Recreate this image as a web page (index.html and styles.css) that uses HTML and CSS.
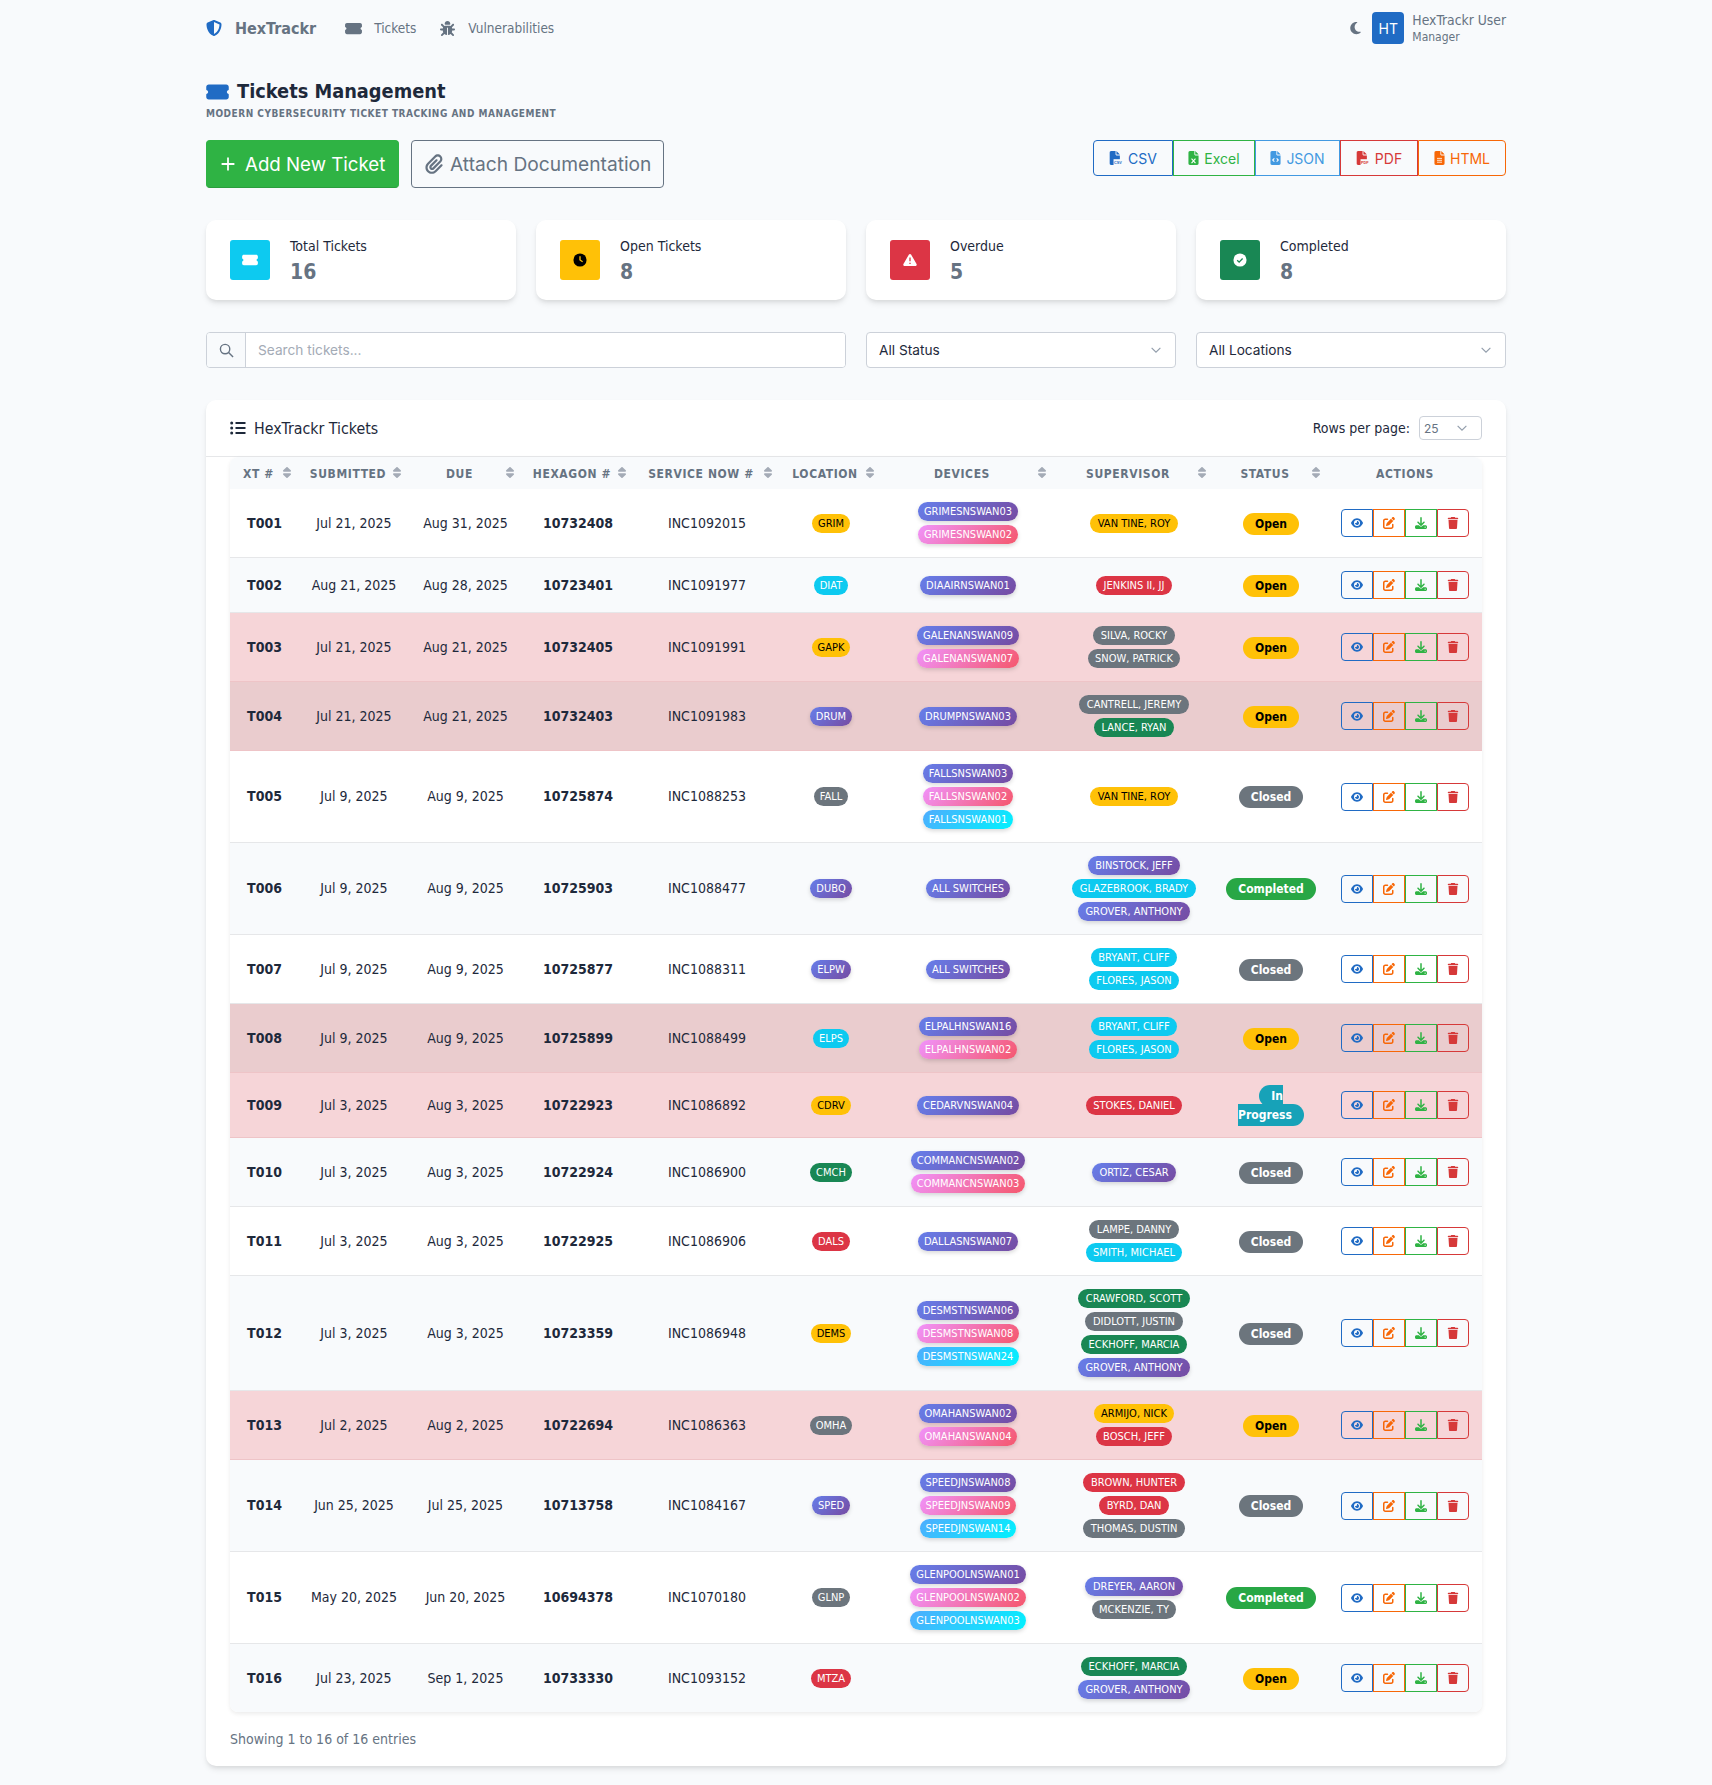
FILE: index.html
```html
<!DOCTYPE html>
<html lang="en">
<head>
    <meta charset="UTF-8">
    <meta name="viewport" content="width=device-width, initial-scale=1.0">
    <title>HexTrackr - Tickets</title>
    <link rel="stylesheet" href="styles.css">
</head>
<body>
    <!-- Icon sprite -->
    <svg class="sprite" xmlns="http://www.w3.org/2000/svg">
        <symbol id="i-ticket" viewBox="0 0 576 512"><path d="M64 64C28.7 64 0 92.7 0 128v64c0 8.8 7.4 15.7 15.7 18.6C34.5 217.1 48 235 48 256s-13.5 38.9-32.3 45.4C7.4 304.3 0 311.2 0 320v64c0 35.3 28.7 64 64 64H512c35.3 0 64-28.7 64-64V320c0-8.8-7.4-15.7-15.7-18.6C541.5 294.9 528 277 528 256s13.5-38.9 32.3-45.4c8.3-2.9 15.7-9.8 15.7-18.6V128c0-35.3-28.7-64-64-64H64z"/></symbol>
        <symbol id="i-shield" viewBox="0 0 512 512"><path d="M256 0c4.6 0 9.2 1 13.4 2.9L457.7 82.8c22 9.3 38.4 31 38.3 57.2c-.5 99.2-41.3 280.7-213.6 363.2c-16.7 8-36.1 8-52.8 0C57.3 420.7 16.5 239.2 16 140c-.1-26.2 16.3-47.9 38.3-57.2L242.7 2.9C246.8 1 251.4 0 256 0zm0 66.8V444.8C394 378 431.1 230.1 432 141.4L256 66.8z"/></symbol>
        <symbol id="i-bug" viewBox="0 0 512 512"><path d="M256 0c53 0 96 43 96 96v3.6c0 15.7-12.7 28.4-28.4 28.4H188.4c-15.7 0-28.4-12.7-28.4-28.4V96c0-53 43-96 96-96zM41.4 105.4c12.5-12.5 32.8-12.5 45.3 0l64 64c.7 .7 1.3 1.4 1.9 2.1c14.2-7.3 30.4-11.4 47.5-11.4H312c17.1 0 33.2 4.1 47.5 11.4c.6-.7 1.2-1.4 1.9-2.1l64-64c12.5-12.5 32.8-12.5 45.3 0s12.5 32.8 0 45.3l-64 64c-.7 .7-1.4 1.3-2.1 1.9c6.2 12 10.1 25.3 11.1 39.5H480c17.7 0 32 14.3 32 32s-14.3 32-32 32H416c0 24.6-5.5 47.8-15.4 68.6c2.2 1.3 4.2 2.9 6 4.8l64 64c12.5 12.5 12.5 32.8 0 45.3s-32.8 12.5-45.3 0l-63.1-63.1c-24.5 21.8-55.8 36.2-90.3 39.6V240c0-8.8-7.2-16-16-16s-16 7.2-16 16V479.2c-34.5-3.4-65.8-17.8-90.3-39.6L86.6 502.6c-12.5 12.5-32.8 12.5-45.3 0s-12.5-32.8 0-45.3l64-64c1.9-1.9 3.9-3.4 6-4.8C101.5 367.8 96 344.6 96 320H32c-17.7 0-32-14.3-32-32s14.3-32 32-32H96.3c1.1-14.1 5-27.5 11.1-39.5c-.7-.6-1.4-1.2-2.1-1.9l-64-64c-12.5-12.5-12.5-32.8 0-45.3z"/></symbol>
        <symbol id="i-moon" viewBox="0 0 384 512"><path d="M223.5 32C100 32 0 132.3 0 256S100 480 223.5 480c60.6 0 115.5-24.2 155.8-63.4c5-4.9 6.3-12.5 3.1-18.7s-10.1-9.7-17-8.5c-9.8 1.7-19.8 2.6-30.1 2.6c-96.9 0-175.5-78.8-175.5-176c0-65.8 36-123.1 89.3-153.3c6.1-3.5 9.2-10.5 7.7-17.3s-7.3-11.9-14.3-12.5c-6.3-.5-12.6-.8-19-.8z"/></symbol>
        <symbol id="i-clip" viewBox="0 0 448 512"><path d="M364.2 83.8c-24.4-24.4-64-24.4-88.4 0l-184 184c-42.1 42.1-42.1 110.3 0 152.4s110.3 42.1 152.4 0l152-152c10.9-10.9 28.7-10.9 39.6 0s10.9 28.7 0 39.6l-152 152c-64 64-167.6 64-231.6 0s-64-167.6 0-231.6l184-184c46.3-46.3 121.3-46.3 167.6 0s46.3 121.3 0 167.6l-176 176c-28.6 28.6-75 28.6-103.6 0s-28.6-75 0-103.6l144-144c10.9-10.9 28.7-10.9 39.6 0s10.9 28.7 0 39.6l-144 144c-6.7 6.7-6.7 17.7 0 24.4s17.7 6.7 24.4 0l176-176c24.4-24.4 24.4-64 0-88.4z"/></symbol>
        <symbol id="i-eye" viewBox="0 0 576 512"><path d="M288 32c-80.8 0-145.5 36.8-192.6 80.6C48.6 156 17.3 208 2.5 243.7c-3.3 7.9-3.3 16.7 0 24.6C17.3 304 48.6 356 95.4 399.4C142.5 443.2 207.2 480 288 480s145.5-36.8 192.6-80.6c46.8-43.5 78.1-95.4 93-131.1c3.3-7.9 3.3-16.7 0-24.6c-14.9-35.7-46.2-87.7-93-131.1C433.5 68.8 368.8 32 288 32zM144 256a144 144 0 1 1 288 0 144 144 0 1 1 -288 0zm144-64c0 35.3-28.7 64-64 64c-7.1 0-13.9-1.2-20.3-3.3c-5.5-1.8-11.9 1.6-11.7 7.4c.3 6.9 1.3 13.8 3.2 20.7c13.7 51.2 66.4 81.6 117.6 67.9s81.6-66.4 67.9-117.6c-11.1-41.5-47.8-69.4-88.6-71.1c-5.8-.2-9.2 6.1-7.4 11.7c2.1 6.4 3.3 13.2 3.3 20.3z"/></symbol>
        <symbol id="i-edit" viewBox="0 0 512 512"><path d="M471.6 21.7c-21.9-21.9-57.3-21.9-79.2 0L362.3 51.7l97.9 97.9 30.1-30.1c21.9-21.9 21.9-57.3 0-79.2L471.6 21.7zm-299.2 220c-6.1 6.1-10.8 13.6-13.5 21.9l-29.6 88.8c-2.9 8.6-.6 18.1 5.8 24.6s15.9 8.7 24.6 5.8l88.8-29.6c8.2-2.7 15.7-7.4 21.9-13.5L437.7 172.3 339.7 74.3 172.4 241.7zM96 64C43 64 0 107 0 160V416c0 53 43 96 96 96H352c53 0 96-43 96-96V320c0-17.7-14.3-32-32-32s-32 14.3-32 32v96c0 17.7-14.3 32-32 32H96c-17.7 0-32-14.3-32-32V160c0-17.7 14.3-32 32-32h96c17.7 0 32-14.3 32-32s-14.3-32-32-32H96z"/></symbol>
        <symbol id="i-down" viewBox="0 0 512 512"><path d="M288 32c0-17.7-14.3-32-32-32s-32 14.3-32 32V274.7l-73.4-73.4c-12.5-12.5-32.8-12.5-45.3 0s-12.5 32.8 0 45.3l128 128c12.5 12.5 32.8 12.5 45.3 0l128-128c12.5-12.5 12.5-32.8 0-45.3s-32.8-12.5-45.3 0L288 274.7V32zM64 352c-35.3 0-64 28.7-64 64v32c0 35.3 28.7 64 64 64H448c35.3 0 64-28.7 64-64V416c0-35.3-28.7-64-64-64H346.5l-45.3 45.3c-25 25-65.5 25-90.5 0L165.5 352H64zm368 56a24 24 0 1 1 0 48 24 24 0 1 1 0-48z"/></symbol>
        <symbol id="i-trash" viewBox="0 0 448 512"><path d="M135.2 17.7L128 32H32C14.3 32 0 46.3 0 64S14.3 96 32 96H416c17.7 0 32-14.3 32-32s-14.3-32-32-32H320l-7.2-14.3C307.4 6.8 296.3 0 284.2 0H163.8c-12.1 0-23.2 6.8-28.6 17.7zM416 128H32L53.2 467c1.6 25.3 22.6 45 47.9 45H346.9c25.3 0 46.3-19.7 47.9-45L416 128z"/></symbol>
        <symbol id="i-file" viewBox="0 0 384 512"><path d="M64 0C28.7 0 0 28.7 0 64V448c0 35.3 28.7 64 64 64H320c35.3 0 64-28.7 64-64V160H256c-17.7 0-32-14.3-32-32V0H64zM256 0V128H384L256 0z"/></symbol>
        <symbol id="i-sort" viewBox="0 0 320 512"><path d="M137.4 41.4c12.5-12.5 32.8-12.5 45.3 0l128 128c9.2 9.2 11.9 22.9 6.9 34.9s-16.6 19.8-29.6 19.8H32c-12.9 0-24.6-7.8-29.6-19.8s-2.2-25.7 6.9-34.9l128-128zm0 429.3l-128-128c-9.2-9.2-11.9-22.9-6.9-34.9s16.6-19.8 29.6-19.8H288c12.9 0 24.6 7.8 29.6 19.8s2.2 25.7-6.9 34.9l-128 128c-12.5 12.5-32.8 12.5-45.3 0z"/></symbol>
    </svg>

    <div class="container">
        <nav class="topnav">
            <a class="brand"><svg class="ic ic-brand"><use href="#i-shield"/></svg>HexTrackr</a>
            <a class="nav-link"><svg class="ic ic-navticket"><use href="#i-ticket"/></svg>Tickets</a>
            <a class="nav-link"><svg class="ic ic-bug"><use href="#i-bug"/></svg>Vulnerabilities</a>
            <div class="user-area">
                <svg class="ic ic-moon"><use href="#i-moon"/></svg>
                <span class="avatar">HT</span>
                <div class="user-info">
                    <div class="user-name">HexTrackr User</div>
                    <div class="user-role">Manager</div>
                </div>
            </div>
        </nav>

        <header class="page-head">
            <h1><svg class="ic ic-title"><use href="#i-ticket"/></svg>Tickets Management</h1>
            <p class="subtitle">Modern cybersecurity ticket tracking and management</p>
        </header>

        <div class="toolbar">
            <button class="btn btn-add"><svg class="ic-plus" viewBox="0 0 20 20"><path d="M10 2v16M2 10h16"/></svg>Add New Ticket</button>
            <button class="btn btn-attach"><svg class="ic ic-clip"><use href="#i-clip"/></svg>Attach Documentation</button>
            <div class="export-group">
                <button class="exp exp-csv"><svg class="ic-file" viewBox="0 0 480 512"><use href="#i-file" width="384" height="512"/><rect x="150" y="300" width="330" height="212" fill="#f8fafc"/><text x="165" y="470" class="ic-file-text">CSV</text></svg>CSV</button>
                <button class="exp exp-xls"><svg class="ic-file" viewBox="0 0 384 512"><use href="#i-file"/><path class="ic-file-mark" d="M120 280l144 160M264 280l-144 160"/></svg>Excel</button>
                <button class="exp exp-json"><svg class="ic-file" viewBox="0 0 384 512"><use href="#i-file"/><path class="ic-file-mark" d="M150 270l-60 60 60 60M234 270l60 60-60 60"/></svg>JSON</button>
                <button class="exp exp-pdf"><svg class="ic-file" viewBox="0 0 480 512"><use href="#i-file" width="384" height="512"/><rect x="150" y="300" width="330" height="212" fill="#f8fafc"/><text x="165" y="470" class="ic-file-text">PDF</text></svg>PDF</button>
                <button class="exp exp-html"><svg class="ic-file" viewBox="0 0 384 512"><use href="#i-file"/><path class="ic-file-mark thin" d="M100 270h184M100 340h184M100 410h184"/></svg>HTML</button>
            </div>
        </div>

        <section class="stats">
            <div class="stat-card">
                <span class="stat-icon bg-info"><svg class="ic ic-stat"><use href="#i-ticket"/></svg></span>
                <div><div class="stat-label">Total Tickets</div><div class="stat-value">16</div></div>
            </div>
            <div class="stat-card">
                <span class="stat-icon bg-warning"><svg class="ic-stat2" viewBox="0 0 16 16"><circle cx="8" cy="8" r="7.5" fill="#000"/><path d="M8 3.6V8l3 2" fill="none" stroke="#ffc107" stroke-width="1.5"/></svg></span>
                <div><div class="stat-label">Open Tickets</div><div class="stat-value">8</div></div>
            </div>
            <div class="stat-card">
                <span class="stat-icon bg-danger"><svg class="ic-stat2" viewBox="0 0 16 16"><path d="M8 1c.5 0 .9.3 1.2.7l6.3 11c.5.9-.1 2.1-1.2 2.1H1.7C.6 14.800 0 13.600.5 12.700l6.300-11C7.100 1.300 7.500 1 8 1z" fill="#fff"/><path d="M8 5v4.500M8 11v1.500" stroke="#dc3545" stroke-width="1.500"/></svg></span>
                <div><div class="stat-label">Overdue</div><div class="stat-value">5</div></div>
            </div>
            <div class="stat-card">
                <span class="stat-icon bg-success"><svg class="ic-stat2" viewBox="0 0 16 16"><circle cx="8" cy="8" r="7.500" fill="#fff"/><path d="M4.800 8.200l2.200 2.200 4-4.200" fill="none" stroke="#198754" stroke-width="1.500"/></svg></span>
                <div><div class="stat-label">Completed</div><div class="stat-value">8</div></div>
            </div>
        </section>

        <section class="filters">
            <div class="search-box">
                <span class="search-addon"><svg class="ic-search" viewBox="0 0 16 16"><circle cx="6.500" cy="6.500" r="5"/><path d="M10.200 10.200L15 15"/></svg></span>
                <input class="search-input" type="text" placeholder="Search tickets...">
            </div>
            <div class="select-box">All Status<svg class="chev" viewBox="0 0 16 16"><path d="M3 5.500l5 5 5-5"/></svg></div>
            <div class="select-box">All Locations<svg class="chev" viewBox="0 0 16 16"><path d="M3 5.500l5 5 5-5"/></svg></div>
        </section>

        <section class="card">
            <div class="card-head">
                <h2><svg class="ic-list" viewBox="0 0 16 16"><circle cx="1.700" cy="3" r="1.500"/><circle cx="1.700" cy="8" r="1.500"/><circle cx="1.700" cy="13" r="1.500"/><path d="M5.500 2h10v2h-10zM5.500 7h10v2h-10zM5.500 12h10v2h-10z"/></svg>HexTrackr Tickets</h2>
                <div class="rows-per">Rows per page:<span class="rows-select">25<svg class="chev" viewBox="0 0 16 16"><path d="M3 5.500l5 5 5-5"/></svg></span></div>
            </div>
            <div class="table-wrap">
                <table class="tickets">
                    <colgroup>
                        <col class="c-xt"><col class="c-sub"><col class="c-due"><col class="c-hex"><col class="c-svc">
                        <col class="c-loc"><col class="c-dev"><col class="c-sup"><col class="c-stat"><col class="c-act">
                    </colgroup>
                    <thead>
                        <tr>
                            <th>XT #<svg class="sort"><use href="#i-sort"/></svg></th>
                            <th>Submitted<svg class="sort"><use href="#i-sort"/></svg></th>
                            <th>Due<svg class="sort"><use href="#i-sort"/></svg></th>
                            <th>Hexagon #<svg class="sort"><use href="#i-sort"/></svg></th>
                            <th>Service Now #<svg class="sort"><use href="#i-sort"/></svg></th>
                            <th>Location<svg class="sort"><use href="#i-sort"/></svg></th>
                            <th>Devices<svg class="sort"><use href="#i-sort"/></svg></th>
                            <th>Supervisor<svg class="sort"><use href="#i-sort"/></svg></th>
                            <th>Status<svg class="sort"><use href="#i-sort"/></svg></th>
                            <th class="no-sort">Actions</th>
                        </tr>
                    </thead>
                    <tbody>
                        <tr>
                            <td class="strong">T001</td><td>Jul 21, 2025</td><td>Aug 31, 2025</td><td class="strong">10732408</td><td>INC1092015</td>
                            <td><span class="pill y">GRIM</span></td>
                            <td><div class="stack"><span class="pill d1">GRIMESNSWAN03</span><span class="pill d2">GRIMESNSWAN02</span></div></td>
                            <td><div class="stack sup"><span class="pill y">VAN TINE, ROY</span></div></td>
                            <td class="status-cell"><span class="status s-open">Open</span></td>
                            <td><div class="actions"><button class="a-view"><svg class="ic"><use href="#i-eye"/></svg></button><button class="a-edit"><svg class="ic"><use href="#i-edit"/></svg></button><button class="a-down"><svg class="ic"><use href="#i-down"/></svg></button><button class="a-del"><svg class="ic"><use href="#i-trash"/></svg></button></div></td>
                        </tr>
                        <tr>
                            <td class="strong">T002</td><td>Aug 21, 2025</td><td>Aug 28, 2025</td><td class="strong">10723401</td><td>INC1091977</td>
                            <td><span class="pill c">DIAT</span></td>
                            <td><div class="stack"><span class="pill d1">DIAAIRNSWAN01</span></div></td>
                            <td><div class="stack sup"><span class="pill r">JENKINS II, JJ</span></div></td>
                            <td class="status-cell"><span class="status s-open">Open</span></td>
                            <td><div class="actions"><button class="a-view"><svg class="ic"><use href="#i-eye"/></svg></button><button class="a-edit"><svg class="ic"><use href="#i-edit"/></svg></button><button class="a-down"><svg class="ic"><use href="#i-down"/></svg></button><button class="a-del"><svg class="ic"><use href="#i-trash"/></svg></button></div></td>
                        </tr>
                        <tr class="late">
                            <td class="strong">T003</td><td>Jul 21, 2025</td><td>Aug 21, 2025</td><td class="strong">10732405</td><td>INC1091991</td>
                            <td><span class="pill y">GAPK</span></td>
                            <td><div class="stack"><span class="pill d1">GALENANSWAN09</span><span class="pill d2">GALENANSWAN07</span></div></td>
                            <td><div class="stack sup"><span class="pill g">SILVA, ROCKY</span><span class="pill g">SNOW, PATRICK</span></div></td>
                            <td class="status-cell"><span class="status s-open">Open</span></td>
                            <td><div class="actions"><button class="a-view"><svg class="ic"><use href="#i-eye"/></svg></button><button class="a-edit"><svg class="ic"><use href="#i-edit"/></svg></button><button class="a-down"><svg class="ic"><use href="#i-down"/></svg></button><button class="a-del"><svg class="ic"><use href="#i-trash"/></svg></button></div></td>
                        </tr>
                        <tr class="late">
                            <td class="strong">T004</td><td>Jul 21, 2025</td><td>Aug 21, 2025</td><td class="strong">10732403</td><td>INC1091983</td>
                            <td><span class="pill d1">DRUM</span></td>
                            <td><div class="stack"><span class="pill d1">DRUMPNSWAN03</span></div></td>
                            <td><div class="stack sup"><span class="pill g">CANTRELL, JEREMY</span><span class="pill gr">LANCE, RYAN</span></div></td>
                            <td class="status-cell"><span class="status s-open">Open</span></td>
                            <td><div class="actions"><button class="a-view"><svg class="ic"><use href="#i-eye"/></svg></button><button class="a-edit"><svg class="ic"><use href="#i-edit"/></svg></button><button class="a-down"><svg class="ic"><use href="#i-down"/></svg></button><button class="a-del"><svg class="ic"><use href="#i-trash"/></svg></button></div></td>
                        </tr>
                        <tr>
                            <td class="strong">T005</td><td>Jul 9, 2025</td><td>Aug 9, 2025</td><td class="strong">10725874</td><td>INC1088253</td>
                            <td><span class="pill g">FALL</span></td>
                            <td><div class="stack"><span class="pill d1">FALLSNSWAN03</span><span class="pill d2">FALLSNSWAN02</span><span class="pill d3">FALLSNSWAN01</span></div></td>
                            <td><div class="stack sup"><span class="pill y">VAN TINE, ROY</span></div></td>
                            <td class="status-cell"><span class="status s-closed">Closed</span></td>
                            <td><div class="actions"><button class="a-view"><svg class="ic"><use href="#i-eye"/></svg></button><button class="a-edit"><svg class="ic"><use href="#i-edit"/></svg></button><button class="a-down"><svg class="ic"><use href="#i-down"/></svg></button><button class="a-del"><svg class="ic"><use href="#i-trash"/></svg></button></div></td>
                        </tr>
                        <tr>
                            <td class="strong">T006</td><td>Jul 9, 2025</td><td>Aug 9, 2025</td><td class="strong">10725903</td><td>INC1088477</td>
                            <td><span class="pill d1">DUBQ</span></td>
                            <td><div class="stack"><span class="pill d1">ALL SWITCHES</span></div></td>
                            <td><div class="stack sup"><span class="pill d1">BINSTOCK, JEFF</span><span class="pill c">GLAZEBROOK, BRADY</span><span class="pill d1">GROVER, ANTHONY</span></div></td>
                            <td class="status-cell"><span class="status s-done">Completed</span></td>
                            <td><div class="actions"><button class="a-view"><svg class="ic"><use href="#i-eye"/></svg></button><button class="a-edit"><svg class="ic"><use href="#i-edit"/></svg></button><button class="a-down"><svg class="ic"><use href="#i-down"/></svg></button><button class="a-del"><svg class="ic"><use href="#i-trash"/></svg></button></div></td>
                        </tr>
                        <tr>
                            <td class="strong">T007</td><td>Jul 9, 2025</td><td>Aug 9, 2025</td><td class="strong">10725877</td><td>INC1088311</td>
                            <td><span class="pill d1">ELPW</span></td>
                            <td><div class="stack"><span class="pill d1">ALL SWITCHES</span></div></td>
                            <td><div class="stack sup"><span class="pill c">BRYANT, CLIFF</span><span class="pill c">FLORES, JASON</span></div></td>
                            <td class="status-cell"><span class="status s-closed">Closed</span></td>
                            <td><div class="actions"><button class="a-view"><svg class="ic"><use href="#i-eye"/></svg></button><button class="a-edit"><svg class="ic"><use href="#i-edit"/></svg></button><button class="a-down"><svg class="ic"><use href="#i-down"/></svg></button><button class="a-del"><svg class="ic"><use href="#i-trash"/></svg></button></div></td>
                        </tr>
                        <tr class="late">
                            <td class="strong">T008</td><td>Jul 9, 2025</td><td>Aug 9, 2025</td><td class="strong">10725899</td><td>INC1088499</td>
                            <td><span class="pill c">ELPS</span></td>
                            <td><div class="stack"><span class="pill d1">ELPALHNSWAN16</span><span class="pill d2">ELPALHNSWAN02</span></div></td>
                            <td><div class="stack sup"><span class="pill c">BRYANT, CLIFF</span><span class="pill c">FLORES, JASON</span></div></td>
                            <td class="status-cell"><span class="status s-open">Open</span></td>
                            <td><div class="actions"><button class="a-view"><svg class="ic"><use href="#i-eye"/></svg></button><button class="a-edit"><svg class="ic"><use href="#i-edit"/></svg></button><button class="a-down"><svg class="ic"><use href="#i-down"/></svg></button><button class="a-del"><svg class="ic"><use href="#i-trash"/></svg></button></div></td>
                        </tr>
                        <tr class="late">
                            <td class="strong">T009</td><td>Jul 3, 2025</td><td>Aug 3, 2025</td><td class="strong">10722923</td><td>INC1086892</td>
                            <td><span class="pill y">CDRV</span></td>
                            <td><div class="stack"><span class="pill d1">CEDARVNSWAN04</span></div></td>
                            <td><div class="stack sup"><span class="pill r">STOKES, DANIEL</span></div></td>
                            <td class="status-cell"><span class="status s-prog">In<br>Progress</span></td>
                            <td><div class="actions"><button class="a-view"><svg class="ic"><use href="#i-eye"/></svg></button><button class="a-edit"><svg class="ic"><use href="#i-edit"/></svg></button><button class="a-down"><svg class="ic"><use href="#i-down"/></svg></button><button class="a-del"><svg class="ic"><use href="#i-trash"/></svg></button></div></td>
                        </tr>
                        <tr>
                            <td class="strong">T010</td><td>Jul 3, 2025</td><td>Aug 3, 2025</td><td class="strong">10722924</td><td>INC1086900</td>
                            <td><span class="pill gr">CMCH</span></td>
                            <td><div class="stack"><span class="pill d1">COMMANCNSWAN02</span><span class="pill d2">COMMANCNSWAN03</span></div></td>
                            <td><div class="stack sup"><span class="pill d1">ORTIZ, CESAR</span></div></td>
                            <td class="status-cell"><span class="status s-closed">Closed</span></td>
                            <td><div class="actions"><button class="a-view"><svg class="ic"><use href="#i-eye"/></svg></button><button class="a-edit"><svg class="ic"><use href="#i-edit"/></svg></button><button class="a-down"><svg class="ic"><use href="#i-down"/></svg></button><button class="a-del"><svg class="ic"><use href="#i-trash"/></svg></button></div></td>
                        </tr>
                        <tr>
                            <td class="strong">T011</td><td>Jul 3, 2025</td><td>Aug 3, 2025</td><td class="strong">10722925</td><td>INC1086906</td>
                            <td><span class="pill r">DALS</span></td>
                            <td><div class="stack"><span class="pill d1">DALLASNSWAN07</span></div></td>
                            <td><div class="stack sup"><span class="pill g">LAMPE, DANNY</span><span class="pill c">SMITH, MICHAEL</span></div></td>
                            <td class="status-cell"><span class="status s-closed">Closed</span></td>
                            <td><div class="actions"><button class="a-view"><svg class="ic"><use href="#i-eye"/></svg></button><button class="a-edit"><svg class="ic"><use href="#i-edit"/></svg></button><button class="a-down"><svg class="ic"><use href="#i-down"/></svg></button><button class="a-del"><svg class="ic"><use href="#i-trash"/></svg></button></div></td>
                        </tr>
                        <tr>
                            <td class="strong">T012</td><td>Jul 3, 2025</td><td>Aug 3, 2025</td><td class="strong">10723359</td><td>INC1086948</td>
                            <td><span class="pill y">DEMS</span></td>
                            <td><div class="stack"><span class="pill d1">DESMSTNSWAN06</span><span class="pill d2">DESMSTNSWAN08</span><span class="pill d3">DESMSTNSWAN24</span></div></td>
                            <td><div class="stack sup"><span class="pill gr">CRAWFORD, SCOTT</span><span class="pill g">DIDLOTT, JUSTIN</span><span class="pill gr">ECKHOFF, MARCIA</span><span class="pill d1">GROVER, ANTHONY</span></div></td>
                            <td class="status-cell"><span class="status s-closed">Closed</span></td>
                            <td><div class="actions"><button class="a-view"><svg class="ic"><use href="#i-eye"/></svg></button><button class="a-edit"><svg class="ic"><use href="#i-edit"/></svg></button><button class="a-down"><svg class="ic"><use href="#i-down"/></svg></button><button class="a-del"><svg class="ic"><use href="#i-trash"/></svg></button></div></td>
                        </tr>
                        <tr class="late">
                            <td class="strong">T013</td><td>Jul 2, 2025</td><td>Aug 2, 2025</td><td class="strong">10722694</td><td>INC1086363</td>
                            <td><span class="pill g">OMHA</span></td>
                            <td><div class="stack"><span class="pill d1">OMAHANSWAN02</span><span class="pill d2">OMAHANSWAN04</span></div></td>
                            <td><div class="stack sup"><span class="pill y">ARMIJO, NICK</span><span class="pill r">BOSCH, JEFF</span></div></td>
                            <td class="status-cell"><span class="status s-open">Open</span></td>
                            <td><div class="actions"><button class="a-view"><svg class="ic"><use href="#i-eye"/></svg></button><button class="a-edit"><svg class="ic"><use href="#i-edit"/></svg></button><button class="a-down"><svg class="ic"><use href="#i-down"/></svg></button><button class="a-del"><svg class="ic"><use href="#i-trash"/></svg></button></div></td>
                        </tr>
                        <tr>
                            <td class="strong">T014</td><td>Jun 25, 2025</td><td>Jul 25, 2025</td><td class="strong">10713758</td><td>INC1084167</td>
                            <td><span class="pill d1">SPED</span></td>
                            <td><div class="stack"><span class="pill d1">SPEEDJNSWAN08</span><span class="pill d2">SPEEDJNSWAN09</span><span class="pill d3">SPEEDJNSWAN14</span></div></td>
                            <td><div class="stack sup"><span class="pill r">BROWN, HUNTER</span><span class="pill r">BYRD, DAN</span><span class="pill g">THOMAS, DUSTIN</span></div></td>
                            <td class="status-cell"><span class="status s-closed">Closed</span></td>
                            <td><div class="actions"><button class="a-view"><svg class="ic"><use href="#i-eye"/></svg></button><button class="a-edit"><svg class="ic"><use href="#i-edit"/></svg></button><button class="a-down"><svg class="ic"><use href="#i-down"/></svg></button><button class="a-del"><svg class="ic"><use href="#i-trash"/></svg></button></div></td>
                        </tr>
                        <tr>
                            <td class="strong">T015</td><td>May 20, 2025</td><td>Jun 20, 2025</td><td class="strong">10694378</td><td>INC1070180</td>
                            <td><span class="pill g">GLNP</span></td>
                            <td><div class="stack"><span class="pill d1">GLENPOOLNSWAN01</span><span class="pill d2">GLENPOOLNSWAN02</span><span class="pill d3">GLENPOOLNSWAN03</span></div></td>
                            <td><div class="stack sup"><span class="pill d1">DREYER, AARON</span><span class="pill g">MCKENZIE, TY</span></div></td>
                            <td class="status-cell"><span class="status s-done">Completed</span></td>
                            <td><div class="actions"><button class="a-view"><svg class="ic"><use href="#i-eye"/></svg></button><button class="a-edit"><svg class="ic"><use href="#i-edit"/></svg></button><button class="a-down"><svg class="ic"><use href="#i-down"/></svg></button><button class="a-del"><svg class="ic"><use href="#i-trash"/></svg></button></div></td>
                        </tr>
                        <tr>
                            <td class="strong">T016</td><td>Jul 23, 2025</td><td>Sep 1, 2025</td><td class="strong">10733330</td><td>INC1093152</td>
                            <td><span class="pill r">MTZA</span></td>
                            <td></td>
                            <td><div class="stack sup"><span class="pill gr">ECKHOFF, MARCIA</span><span class="pill d1">GROVER, ANTHONY</span></div></td>
                            <td class="status-cell"><span class="status s-open">Open</span></td>
                            <td><div class="actions"><button class="a-view"><svg class="ic"><use href="#i-eye"/></svg></button><button class="a-edit"><svg class="ic"><use href="#i-edit"/></svg></button><button class="a-down"><svg class="ic"><use href="#i-down"/></svg></button><button class="a-del"><svg class="ic"><use href="#i-trash"/></svg></button></div></td>
                        </tr>
                    </tbody>
                </table>
            </div>
            <div class="table-foot">Showing 1 to 16 of 16 entries</div>
        </section>
    </div>
</body>
</html>
```

FILE: styles.css
```css
* {
    box-sizing: border-box;
}
body {
    margin: 0;
    background: #f8fafc;
    color: #1e293b;
    font-family: "DejaVu Sans Condensed", "DejaVu Sans", sans-serif;
    font-stretch: condensed;
    font-size: 14px;
}
svg {
    flex-shrink: 0;
}
.sprite {
    display: none;
}
.container {
    width: 1300px;
    margin: 0 auto;
    padding-bottom: 20px;
}
.ic {
    fill: currentColor;
    display: block;
}

/* Top nav */
.topnav {
    display: flex;
    align-items: center;
    height: 56px;
    color: #667382;
}
.brand {
    display: flex;
    align-items: center;
    font-weight: 700;
    font-size: 16px;
    margin-right: 29px;
}
.ic-brand {
    width: 16px;
    height: 16px;
    color: #206bc4;
    margin-right: 13px;
}
.nav-link {
    display: flex;
    align-items: center;
    font-size: 13.500px;
    margin-right: 24px;
}
.ic-navticket {
    width: 17px;
    height: 15px;
    margin-right: 12px;
}
.ic-bug {
    width: 15px;
    height: 15px;
    margin-right: 13px;
}
.user-area {
    margin-left: auto;
    display: flex;
    align-items: center;
}
.ic-moon {
    width: 11px;
    height: 14px;
    margin-right: 11px;
}
.avatar {
    width: 32px;
    height: 32px;
    border-radius: 4px;
    background: #206bc4;
    color: #fff;
    font-family: Inter, sans-serif;
    font-stretch: normal;
    font-size: 14px;
    display: flex;
    align-items: center;
    justify-content: center;
    margin-right: 8px;
}
.user-name {
    font-size: 13.800px;
    line-height: 18px;
}
.user-role {
    font-size: 12px;
    line-height: 17px;
}

/* Page head */
.page-head {
    padding-top: 22px;
}
h1 {
    display: flex;
    align-items: center;
    margin: 0;
    font-size: 19.800px;
    line-height: 27px;
    color: #1e293b;
}
.ic-title {
    width: 23px;
    height: 20px;
    color: #206bc4;
    margin-right: 8px;
}
.subtitle {
    margin: 2px 0 0;
    font-size: 10px;
    line-height: 14px;
    font-weight: 700;
    letter-spacing: .5px;
    text-transform: uppercase;
    color: #667382;
}

/* Toolbar */
.toolbar {
    display: flex;
    align-items: flex-start;
    gap: 12px;
    margin-top: 19px;
}
.btn {
    display: flex;
    align-items: center;
    height: 48px;
    padding: 0 13px;
    border-radius: 4px;
    font-family: Inter, sans-serif;
    font-stretch: normal;
    white-space: nowrap;
}
.btn-add {
    width: 193px;
    background: #2fb344;
    border: 1px solid #2fb344;
    border-bottom: 1px solid #2a9d3d;
    color: #fff;
    font-size: 18.700px;
}
.ic-plus {
    width: 16px;
    height: 16px;
    margin-right: 9px;
    fill: none;
    stroke: #fff;
    stroke-width: 2.200;
}
.btn-attach {
    width: 253px;
    background: transparent;
    border: 1px solid #667382;
    color: #667382;
    font-size: 19.200px;
}
.ic-clip {
    width: 18px;
    height: 20px;
    margin-right: 7px;
}
.export-group {
    margin-left: auto;
    display: flex;
    height: 36px;
}
.exp {
    display: flex;
    align-items: center;
    justify-content: center;
    gap: 5px;
    height: 36px;
    background: transparent;
    border: 1px solid currentColor;
    border-left-width: 0;
    font-family: Inter, sans-serif;
    font-stretch: normal;
    font-size: 14px;
    padding: 0;
}
.exp-csv {
    width: 80px;
    color: #206bc4;
    border-left-width: 1px;
    border-radius: 4px 0 0 4px;
}
.exp-xls {
    width: 82px;
    color: #2fb344;
    border-left: 1px solid #2fb344;
}
.exp-json {
    width: 85px;
    color: #4299e1;
    border-left: 1px solid #4299e1;
}
.exp-pdf {
    width: 78px;
    color: #d63939;
    border-left: 1px solid #d63939;
}
.exp-html {
    width: 88px;
    color: #f76707;
    border-left: 1px solid #f76707;
    border-radius: 0 4px 4px 0;
}
.ic-file {
    height: 14px;
    width: auto;
    fill: currentColor;
}
.exp-csv .ic-file,
.exp-pdf .ic-file {
    width: 14px;
}
.exp-xls .ic-file,
.exp-json .ic-file,
.exp-html .ic-file {
    width: 11px;
}
.ic-file-mark {
    fill: none;
    stroke: #fff;
    stroke-width: 40;
}
.ic-file-mark.thin {
    stroke-width: 30;
}
.ic-file-text {
    font-family: "Liberation Sans", sans-serif;
    font-size: 140px;
    font-weight: 700;
}

/* Stat cards */
.stats {
    display: grid;
    grid-template-columns: repeat(4, 310px);
    gap: 20px;
    margin-top: 32px;
}
.stat-card {
    display: flex;
    align-items: center;
    gap: 20px;
    height: 80px;
    padding: 0 24px;
    background: #fff;
    border-radius: 10px;
    box-shadow: 0 4px 6px -1px rgba(0, 0, 0, .1), 0 2px 4px -1px rgba(0, 0, 0, .06);
}
.stat-icon {
    width: 40px;
    height: 40px;
    border-radius: 3px;
    display: flex;
    align-items: center;
    justify-content: center;
    color: #fff;
}
.bg-info { background: #0dcaf0; }
.bg-warning { background: #ffc107; }
.bg-danger { background: #dc3545; }
.bg-success { background: #198754; }
.ic-stat {
    width: 16px;
    height: 14px;
}
.ic-stat2 {
    width: 14px;
    height: 14px;
}
.stat-label {
    font-size: 14px;
    line-height: 20px;
}
.stat-value {
    margin: 2px 0 -2px;
    font-size: 21px;
    line-height: 28px;
    font-weight: 700;
    color: #667382;
}

/* Filters */
.filters {
    display: grid;
    grid-template-columns: 640px 310px 310px;
    gap: 20px;
    margin-top: 32px;
}
.search-box {
    display: flex;
    height: 36px;
    border: 1px solid #ccd1d9;
    border-radius: 4px;
    overflow: hidden;
    background: #fff;
}
.search-addon {
    width: 39px;
    display: flex;
    align-items: center;
    justify-content: center;
    background: #f8fafc;
    border-right: 1px solid #ccd1d9;
}
.ic-search {
    width: 15px;
    height: 15px;
    fill: none;
    stroke: #667382;
    stroke-width: 1.500;
}
.search-input {
    flex: 1;
    border: 0;
    outline: 0;
    padding: 0 12px;
    font-family: Inter, sans-serif;
    font-stretch: normal;
    font-size: 13.700px;
}
.search-input::placeholder {
    color: #a4abb6;
}
.select-box {
    display: flex;
    align-items: center;
    justify-content: space-between;
    height: 36px;
    padding: 0 12px;
    background: #fff;
    border: 1px solid #ccd1d9;
    border-radius: 4px;
    font-family: Inter, sans-serif;
    font-stretch: normal;
    font-size: 13.700px;
}
.chev {
    width: 14px;
    height: 14px;
    fill: none;
    stroke: #929dab;
    stroke-width: 1.300;
}

/* Main card */
.card {
    margin-top: 32px;
    background: #fff;
    border-radius: 10px;
    box-shadow: 0 4px 6px -1px rgba(0, 0, 0, .1), 0 2px 4px -1px rgba(0, 0, 0, .06);
    padding-bottom: 18px;
}
.card-head {
    display: flex;
    align-items: center;
    justify-content: space-between;
    height: 57px;
    padding: 0 24px;
    border-bottom: 1px solid #e6e7e9;
}
h2 {
    display: flex;
    align-items: center;
    margin: 0;
    font-size: 15.800px;
    font-weight: 400;
}
.ic-list {
    width: 16px;
    height: 16px;
    margin-right: 8px;
    fill: #1e293b;
}
.rows-per {
    display: flex;
    align-items: center;
    gap: 9px;
    font-size: 14px;
}
.rows-select {
    display: flex;
    align-items: center;
    justify-content: space-between;
    width: 63px;
    height: 24px;
    padding: 0 12px 0 4px;
    border: 1px solid #ccd1d9;
    border-radius: 4px;
    font-family: Inter, sans-serif;
    font-stretch: normal;
    font-size: 12px;
    color: #667382;
}

/* Table */
.table-wrap {
    margin: 0 24px;
    border-radius: 8px;
    overflow: hidden;
    box-shadow: 0 2px 4px rgba(0, 0, 0, .08);
}
.tickets {
    width: 1252px;
    table-layout: fixed;
    border-collapse: collapse;
}
.c-xt { width: 69px; }
.c-sub { width: 110px; }
.c-due { width: 113px; }
.c-hex { width: 112px; }
.c-svc { width: 146px; }
.c-loc { width: 102px; }
.c-dev { width: 172px; }
.c-sup { width: 160px; }
.c-stat { width: 114px; }
.c-act { width: 154px; }
th {
    position: relative;
    height: 32px;
    padding: 2px 20px 0 8px;
    background: #f8fafc;
    font-size: 12px;
    font-weight: 700;
    letter-spacing: .6px;
    text-transform: uppercase;
    color: #667382;
    white-space: nowrap;
    text-align: center;
}
th.no-sort {
    padding: 2px 0 0;
}
.sort {
    position: absolute;
    right: 8px;
    top: 9px;
    width: 8px;
    height: 13px;
    fill: #a4abb6;
}
td {
    padding: 13px 8px;
    border-bottom: 1px solid #e6e7e9;
    text-align: center;
    vertical-align: middle;
    font-size: 14px;
    line-height: 19px;
    color: #1e293b;
}
td.status-cell {
    padding: 14px 8px 12px;
    font-size: 12px;
}
tbody tr:last-child td {
    border-bottom: 0;
}
tbody tr:nth-child(even) td {
    background: #f8fafc;
}
tbody tr.late td {
    background: #f6d5d8;
    border-bottom-color: #eec4c7;
}
tbody tr.late:nth-child(even) td {
    background: #eaccce;
}
.strong {
    font-weight: 700;
}
.stack {
    display: flex;
    flex-direction: column;
    align-items: center;
    gap: 4px;
}
.pill {
    display: inline-block;
    height: 19px;
    padding: 0 6px;
    border-radius: 10px;
    font-size: 11px;
    line-height: 19px;
    color: #fff;
    white-space: nowrap;
    vertical-align: middle;
}
.sup .pill {
    padding: 0 7.500px;
}
.pill.y { background: #ffc107; color: #000; }
.pill.c { background: #0dcaf0; }
.pill.r { background: #dc3545; }
.pill.g { background: #6c757d; }
.pill.gr { background: #198754; }
.pill.d1 {
    background: linear-gradient(135deg, #667eea, #764ba2);
    box-shadow: 0 2px 4px rgba(0, 0, 0, .15);
}
.pill.d2 {
    background: linear-gradient(135deg, #f093fb, #f5576c);
    box-shadow: 0 2px 4px rgba(0, 0, 0, .15);
}
.pill.d3 {
    background: linear-gradient(135deg, #4facfe, #00f2fe);
    box-shadow: 0 2px 4px rgba(0, 0, 0, .15);
}
.status {
    padding: 4px 12px;
    border-radius: 11px;
    font-size: 12px;
    line-height: 19px;
    font-weight: 700;
    color: #fff;
}
.s-open { background: #ffc107; color: #000; }
.s-closed { background: #6c757d; }
.s-done { background: #28a745; }
.s-prog { background: #17a2b8; }
.actions {
    display: flex;
    width: 128px;
    height: 28px;
    margin: 0 auto;
}
.actions button {
    width: 32px;
    padding: 0;
    background: transparent;
    border: 1px solid currentColor;
    border-left-width: 0;
    display: flex;
    align-items: center;
    justify-content: center;
}
.actions .ic {
    width: 12px;
    height: 12px;
}
.a-view {
    color: #206bc4;
    border-left-width: 1px !important;
    border-radius: 4px 0 0 4px;
}
.a-edit {
    color: #f76707;
    border-left: 1px solid #f76707 !important;
}
.a-down {
    color: #2fb344;
    border-left: 1px solid #2fb344 !important;
}
.a-del {
    color: #d63939;
    border-left: 1px solid #d63939 !important;
    border-radius: 0 4px 4px 0;
}
.table-foot {
    padding: 18px 24px 0;
    font-size: 14px;
    line-height: 18px;
    color: #667382;
}
```
